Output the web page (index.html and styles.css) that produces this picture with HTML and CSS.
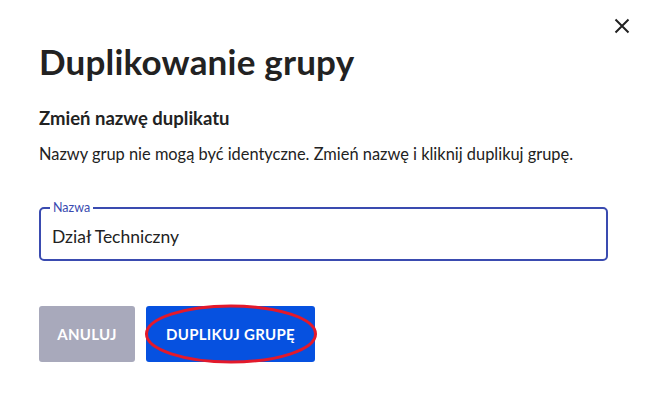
FILE: index.html
```html
<!DOCTYPE html>
<html lang="pl">
<head>
<meta charset="utf-8">
<link rel="stylesheet" href="styles.css">
</head>
<body>
<div class="dialog">
  <button class="close" aria-label="Zamknij">
    <svg width="16" height="16" viewBox="0 0 16 16"><path d="M1.5 1.5 L14.5 14.5 M14.5 1.5 L1.5 14.5" stroke="#222" stroke-width="2" fill="none"/></svg>
  </button>
  <h1 class="title">Duplikowanie grupy</h1>
  <h2 class="subtitle">Zmień nazwę duplikatu</h2>
  <p class="desc">Nazwy grup nie mogą być identyczne. Zmień nazwę i kliknij duplikuj grupę.</p>
  <fieldset class="field">
    <legend class="field-label">Nazwa</legend>
    <div class="field-value">Dział Techniczny</div>
  </fieldset>
  <div class="actions">
    <button class="btn btn-cancel">ANULUJ</button>
    <div class="btn-wrap">
      <button class="btn btn-primary">DUPLIKUJ GRUPĘ</button>
      <svg class="mark" width="176" height="62" viewBox="0 0 176 62"><ellipse cx="88" cy="31" rx="84.5" ry="28" fill="none" stroke="#e3192b" stroke-width="3"/></svg>
    </div>
  </div>
</div>
</body>
</html>
```
FILE: styles.css
```css
* { box-sizing: border-box; }
html, body { margin: 0; padding: 0; background: #fff; }
body { font-family: "Lato", "Liberation Sans", sans-serif; color: #222; }
.dialog {
  position: relative;
  width: 649px;
  height: 403px;
  padding: 37px 41px 0 39px;
}
.close {
  position: absolute;
  top: 18px;
  right: 19px;
  width: 16px;
  height: 16px;
  padding: 0;
  border: 0;
  background: none;
  display: flex;
}
.title {
  margin: 0;
  font-size: 35px;
  line-height: 48px;
  font-weight: 700;
  color: #222;
  letter-spacing: 0.2px;
}
.subtitle {
  margin: 22px 0 0;
  font-size: 18.5px;
  line-height: 22px;
  font-weight: 700;
  color: #222;
}
.desc {
  margin: 14px 0 0;
  font-size: 16.4px;
  line-height: 22px;
  color: #222;
}
.field {
  margin: 36px 0 0;
  padding: 0 11px 0 11px;
  height: 60px;
  border: 2px solid #3a4bb0;
  border-radius: 5px;
  min-width: 0;
}
.field-label {
  padding: 0 3px;
  margin-left: -2px;
  font-size: 12.5px;
  line-height: 14px;
  color: #3a4bb0;
}
.field-value {
  margin-top: 11px;
  font-size: 17.5px;
  line-height: 22px;
  color: #222;
}
.actions {
  margin-top: 45px;
  display: flex;
  gap: 11px;
}
.btn {
  height: 56px;
  border: 0;
  border-radius: 3px;
  font-family: inherit;
  font-size: 15px;
  font-weight: 700;
  color: #fff;
  letter-spacing: 0.3px;
  padding: 0;
}
.btn-cancel { width: 96px; background: #a8a9bb; }
.btn-wrap { position: relative; display: flex; }
.btn-primary { width: 169px; background: #0651e0; }
.mark {
  position: absolute;
  left: -3px;
  top: -3px;
  pointer-events: none;
}
```
